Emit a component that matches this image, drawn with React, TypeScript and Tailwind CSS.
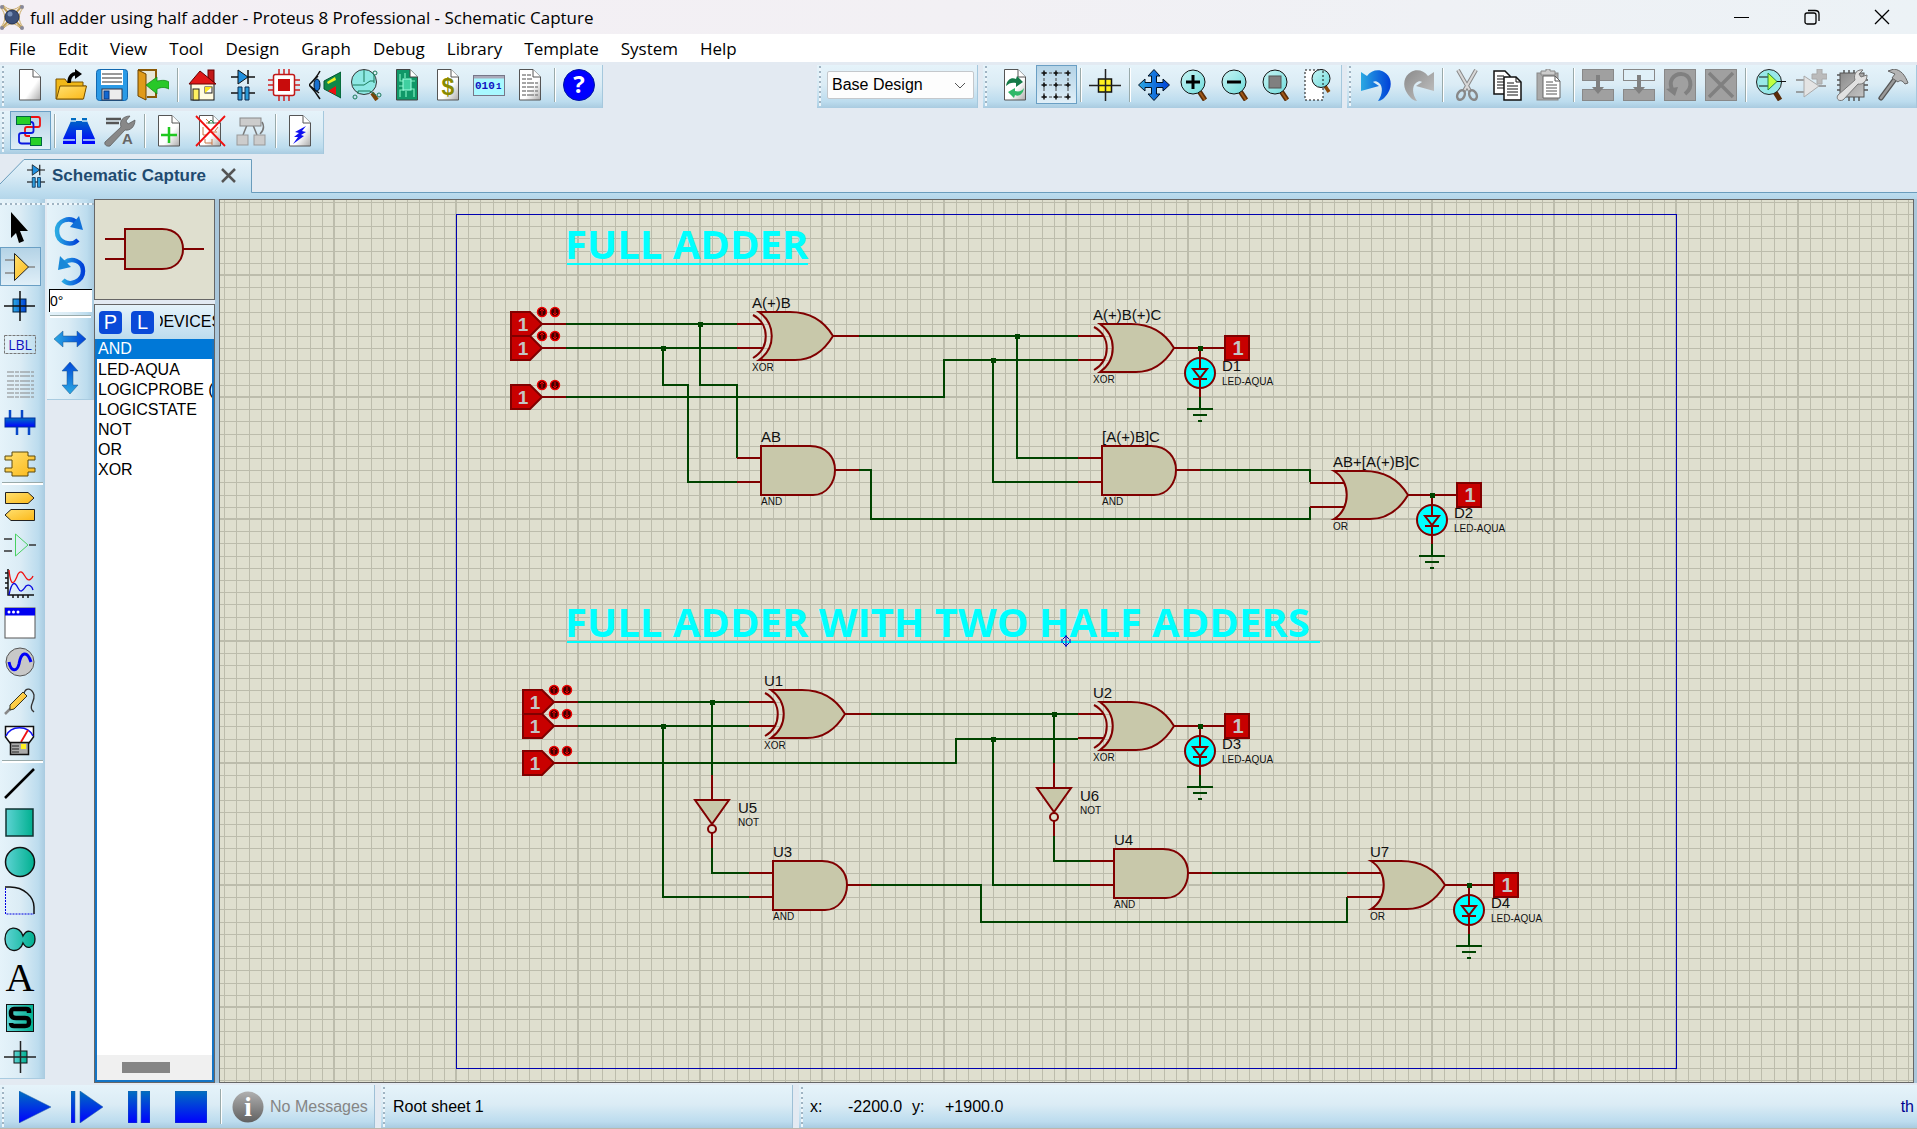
import React, { ReactNode } from "react";

/* ---------- shared paint definitions ---------- */

function Paints() {
  return (
    <svg width="0" height="0" className="absolute" aria-hidden="true">
      <defs>
        <linearGradient id="paper" x1="0" y1="0" x2="1" y2="1">
          <stop offset="0.6" stopColor="#fff" />
          <stop offset="1" stopColor="#aaa" />
        </linearGradient>
        <linearGradient id="gold" x1="0" y1="0" x2="1" y2="1">
          <stop offset="0" stopColor="#ffe070" />
          <stop offset="1" stopColor="#fbb818" />
        </linearGradient>
        <linearGradient id="blue" x1="0" y1="0" x2="1" y2="0">
          <stop offset="0" stopColor="#2aa9e2" />
          <stop offset="1" stopColor="#0040d8" />
        </linearGradient>
        <linearGradient id="blueDown" x1="0" y1="0" x2="0" y2="1">
          <stop offset="0" stopColor="#0070c0" />
          <stop offset="1" stopColor="#0000ff" />
        </linearGradient>
        <linearGradient id="blueUp" x1="0" y1="0" x2="0" y2="1">
          <stop offset="0" stopColor="#0048d8" />
          <stop offset="1" stopColor="#2aa9e2" />
        </linearGradient>
        <linearGradient id="teal" x1="0" y1="0" x2="1" y2="0">
          <stop offset="0" stopColor="#5ed3d3" />
          <stop offset="1" stopColor="#00b090" />
        </linearGradient>
        <linearGradient id="lens" x1="0" y1="0" x2="1" y2="1">
          <stop offset="0" stopColor="#c8f4f4" />
          <stop offset="1" stopColor="#70dcdc" />
        </linearGradient>
        <linearGradient id="grey" x1="0" y1="0" x2="1" y2="1">
          <stop offset="0" stopColor="#8a8a8a" />
          <stop offset="1" stopColor="#c4c4c4" />
        </linearGradient>
        <linearGradient id="infoGrey" x1="0" y1="0" x2="0" y2="1">
          <stop offset="0" stopColor="#b0b0b0" />
          <stop offset="1" stopColor="#606060" />
        </linearGradient>
      </defs>
    </svg>
  );
}

/* ---------- icons, all on a 32 x 32 field ---------- */

const Ico = ({ children }: { children: ReactNode }) => (
  <svg width="32" height="32" viewBox="0 0 32 32" fill="none" aria-hidden="true" className="shrink-0">
    {children}
  </svg>
);

const Page = ({ children }: { children?: ReactNode }) => (
  <Ico>
    <path d="M5.5 .5H19L26.500 8V31H5.500Z" fill="url(#paper)" stroke="#555" />
    <path d="M19 .5V8H26.500" stroke="#555" fill="#fff" />
    {children}
  </Ico>
);

const Lens = ({ children }: { children?: ReactNode }) => (
  <Ico>
    <path d="M20 22L26 31" stroke="#5a2c08" strokeWidth="5" />
    <path d="M20 22L26 31" stroke="#a05818" strokeWidth="2" />
    <circle cx="14" cy="13" r="12" fill="url(#lens)" stroke="#111" />
    {children}
  </Ico>
);

const DiodeCap = (
  <>
    <path d="M4 8H28M21 1V15" stroke="#111" strokeWidth="1.500" />
    <path d="M11 1V15L21 8Z" fill="#2090e0" stroke="#111" />
    <path d="M4 24H28" stroke="#111" strokeWidth="1.500" />
    <path d="M11 18H15V31H11ZM18 18H22V31H18Z" fill="#2a9ad8" stroke="#0a2a50" />
  </>
);

const icons: Record<string, ReactNode> = {
  new: <Page />,
  open: (
    <Ico>
      <path d="M1 30V10H10L12 13H28V17H31L28 30Z" fill="#f0b818" stroke="#7a5200" />
      <path d="M5 17H31.500L28.500 30H1.500Z" fill="url(#gold)" stroke="#7a5200" />
      <path d="M14 14C14 7 18 4 22 5" stroke="#000" strokeWidth="3.500" />
      <path d="M20 0L27 5L20 10Z" fill="#000" />
    </Ico>
  ),
  save: (
    <Ico>
      <rect x=".5" y=".5" width="31" height="31" rx="3" fill="#2a9ae6" stroke="#1268b0" />
      <rect x="5" y="1" width="22" height="15" fill="#fff" />
      <path d="M6 5H26M6 9H26M6 13H26" stroke="#777" strokeWidth="1.500" />
      <rect x="6" y="20" width="20" height="11" fill="#ececec" stroke="#334" />
      <rect x="8" y="22" width="5" height="8" fill="#1268d0" stroke="#0a3a80" />
    </Ico>
  ),
  exit: (
    <Ico>
      <path d="M1 1H19V28H10" fill="#e8e8d8" stroke="#8a5a08" strokeWidth="2" />
      <path d="M1 1L9 5V31L1 27Z" fill="#e09a18" stroke="#6a4200" />
      <path d="M9 16L20 8V12C26 11 29 11 32 13V20C28 18 24 18 20 20V25Z" fill="#28c828" stroke="#108010" strokeWidth=".7" />
    </Ico>
  ),
  home: (
    <Ico>
      <rect x="22" y="1" width="6" height="12" fill="#c01818" stroke="#600" />
      <rect x="5" y="14" width="23" height="17" fill="#fffbe0" stroke="#111" />
      <path d="M3 15L14 2L30 15Z" fill="#e01818" stroke="#600" />
      <rect x="7" y="20" width="6" height="11" fill="#fff060" stroke="#222" />
      <rect x="19" y="18" width="7" height="6" fill="#fff" stroke="#222" />
      <path d="M19 18H26L19 24Z" fill="#ffe820" />
    </Ico>
  ),
  diode: <Ico>{DiodeCap}</Ico>,
  chip: (
    <Ico>
      <path d="M11 0V32M16 0V32M21 0V32M0 11H32M0 16H32M0 21H32" stroke="#d02020" strokeWidth="1.500" />
      <rect x="5.500" y="5.500" width="21" height="21" rx="2" fill="#fff" stroke="#c01818" strokeWidth="1.500" />
      <rect x="10" y="10" width="12" height="12" fill="#c80c0c" />
    </Ico>
  ),
  eye: (
    <Ico>
      <path d="M11 2C8 8 4 12 0 16C4 20 8 25 11 30M0 16L9 7M0 16L10 24" stroke="#111" strokeWidth="1.500" />
      <ellipse cx="8" cy="16" rx="3" ry="6" fill="#1870d0" stroke="#012" />
      <path d="M32 3V29L15 20V12Z" fill="#108848" stroke="#053" />
      <path d="M18 13L26 8L27 11L19 15Z" fill="#f0f020" />
      <path d="M19 22L27 17V26Z" fill="#f01010" />
    </Ico>
  ),
  inspect: (
    <Ico>
      <path d="M22 24L27 31" stroke="#7a4408" strokeWidth="4" />
      <circle cx="14" cy="13" r="12.500" fill="#8ee8e4" stroke="#333" />
      <path d="M14 1V13M3 16H14L20 12H24M24 6V14M8 25V22H20L26 26" stroke="#1a7a5a" />
      <circle cx="25" cy="4" r="2" stroke="#1a7a5a" />
      <circle cx="29" cy="26" r="2" stroke="#1a7a5a" />
      <circle cx="5" cy="28" r="2" stroke="#1a7a5a" />
    </Ico>
  ),
  pcb: (
    <Ico>
      <path d="M5.500 .5H19L26.500 8V31H5.500Z" fill="#109868" stroke="#444" />
      <path d="M19 .5V8H26.500" fill="#fff" stroke="#444" />
      <path d="M9 5V12H13M14 4V9M8 17H12M9 28V21H13M15 28V22M23 28V20H20M24 12H20" stroke="#7ff0c0" strokeWidth="1.200" />
      <rect x="12" y="10" width="8" height="11" fill="#40d0a0" stroke="#a0ffe0" />
    </Ico>
  ),
  bom: (
    <Page>
      <text x="16" y="26" textAnchor="middle" fontSize="23" fontWeight="bold" fontFamily="Liberation Sans, sans-serif" fill="#8a8a00">$</text>
    </Page>
  ),
  binary: (
    <Ico>
      <rect x=".5" y="6.500" width="31" height="20" fill="#a8f8ff" stroke="#778" />
      <rect x="1" y="7" width="30" height="2.500" fill="#aab" />
      <text x="2" y="20" fontSize="11" fontWeight="bold" fontFamily="Liberation Mono, monospace" fill="#1010c0">010</text>
      <text x="23" y="20" fontSize="9" fontWeight="bold" fontFamily="Liberation Mono, monospace" fill="#1010c0">1</text>
    </Ico>
  ),
  notes: (
    <Page>
      <path d="M8 6H17M8 10H18M8 14H24M8 18H24M8 22H24M8 26H24" stroke="#888" strokeWidth="1.500" strokeDasharray="4 1 7 1" />
    </Page>
  ),
  help: (
    <Ico>
      <circle cx="16" cy="16" r="15.500" fill="#0000ff" stroke="#0018a0" />
      <text x="16" y="24" textAnchor="middle" fontSize="24" fontWeight="bold" fontFamily="Open Sans, sans-serif" fill="#fff">?</text>
    </Ico>
  ),
  route: (
    <Ico>
      <path d="M17 2H24Q26 2 26 4V10Q26 12 24 12H13Q11 12 11 14V19Q11 21 13 21H16" stroke="#f01010" strokeWidth="1.800" />
      <path d="M17 7Q19.500 7 19.500 10V16Q19.500 18 17 18H8Q5 18 5 20V26Q5 28.500 8 28.500H16" stroke="#0818e0" strokeWidth="1.800" />
      <rect x="2.500" y="1.500" width="14" height="8" fill="#28d028" stroke="#064" />
      <rect x="16.500" y="22.500" width="11" height="8" fill="#28d028" stroke="#064" />
    </Ico>
  ),
  find: (
    <Ico>
      <path d="M8 3H13V6H19V3H24V6L32 24V29H19V15H13V29H0V24L8 6Z" fill="url(#blueDown)" />
      <path d="M8 6H13M19 6H24M0 25H12M20 25H32" stroke="#c8e6f8" strokeWidth="1.500" />
    </Ico>
  ),
  assign: (
    <Ico>
      <path d="M2 4H17M2 8H15" stroke="#555" strokeWidth="2.500" />
      <path d="M1 27L17 12C15 6 19 1 26 1L22 6L24 9L31 5C31 12 26 16 21 15L6 31C2 32 0 29 1 27Z" fill="#888" stroke="#555" strokeWidth=".7" />
      <text x="18" y="29" fontSize="15" fontWeight="bold" fontFamily="Liberation Sans, sans-serif" fill="#666">A</text>
    </Ico>
  ),
  addSheet: (
    <Page>
      <path d="M16 12V28M8 20H24" stroke="#20c820" strokeWidth="2.500" />
    </Page>
  ),
  dropSheet: (
    <Page>
      <path d="M12 4L16 8H12M9 12V20H13M16 17H23M21 16L24 12M11 24V28H18M18 24V30" stroke="#c87848" />
      <path d="M14 8L17 5L20 8Z" stroke="#389058" />
      <path d="M2 1L31 31M31 1L2 31" stroke="#f01010" strokeWidth="1.800" />
    </Page>
  ),
  tree: (
    <Ico>
      <path d="M12 10L8 20M18 10L22 20M27 7C30 12 28 16 25 19" stroke="#777" strokeWidth="1.500" />
      <rect x="5" y="3" width="21" height="8" fill="#ccc" stroke="#888" />
      <rect x="2" y="20" width="11" height="10" fill="#ccc" stroke="#999" />
      <rect x="19" y="20" width="11" height="10" fill="#ccc" stroke="#999" />
    </Ico>
  ),
  flash: (
    <Page>
      <path d="M22 11L11 17L15 18L10 22L14 22L9 29L20 21L17 20L22 17L18 16Z" fill="#1010f0" />
    </Page>
  ),
  refresh: (
    <Page>
      <path d="M7 17C8 10 13 8 17 10L18 7L24 13L17 18V14C13 13 10 14 7 17Z" fill="#157a48" />
      <path d="M25 19C24 26 19 28 16 26L15 29L9 23L16 19V22C20 23 23 22 25 19Z" fill="#30b868" />
    </Page>
  ),
  grid: (
    <Ico>
      <path d="M4 4H28M4 16H28M4 28H28M4 4V28M16 4V28M28 4V28" stroke="#444" strokeDasharray="3 2" />
      {[4, 16, 28].map((x) => [4, 16, 28].map((y) => (
        <path key={`${x}-${y}`} d={`M${x - 2.5} ${y}H${x + 2.5}M${x} ${y - 2.5}V${y + 2.5}`} stroke="#111" strokeWidth="1.500" />
      )))}
    </Ico>
  ),
  origin: (
    <Ico>
      <rect x="9.500" y="10" width="13" height="13" fill="#fff020" stroke="#111" strokeWidth="1.500" />
      <path d="M0 16.500H32M16.500 0V32" stroke="#222" strokeWidth="1.500" />
    </Ico>
  ),
  pan: (
    <Ico>
      <path d="M16 .5L22 7H18.500V13.500H25V10L31.500 16L25 22V18.500H18.500V25H22L16 31.500L10 25H13.500V18.500H7V22L.5 16L7 10V13.500H13.500V7H10Z" fill="url(#blue)" stroke="#012" />
    </Ico>
  ),
  zoomIn: <Lens><path d="M14 6V20M7 13H21" stroke="#000" strokeWidth="3" /></Lens>,
  zoomOut: <Lens><path d="M7 13H21" stroke="#000" strokeWidth="3" /></Lens>,
  zoomAll: <Lens><rect x="8" y="7" width="12" height="12" fill="#808080" stroke="#555" /></Lens>,
  zoomArea: (
    <Ico>
      <rect x="3" y="1" width="18" height="30" fill="#fff" stroke="#111" strokeDasharray="2 2" />
      <path d="M23 17L27 23" stroke="#8a4808" strokeWidth="3.500" />
      <circle cx="19" cy="9.500" r="9" fill="url(#lens)" stroke="#111" />
      <path d="M21 2V18" stroke="#111" strokeDasharray="2 2" />
    </Ico>
  ),
  undo: (
    <Ico>
      <path d="M0 3L6 7C10 1 18 0 23 3C30 7 32 16 27 24C24 29 20 32 17 32C22 25 22 17 18 14C16 12 13 12 12 13L18 17L0 22Z" fill="url(#blue)" />
    </Ico>
  ),
  redo: (
    <Ico>
      <path d="M32 3L26 7C22 1 14 0 9 3C2 7 0 16 5 24C8 29 12 32 15 32C10 25 10 17 14 14C16 12 19 12 20 13L14 17L32 22Z" fill="url(#grey)" />
    </Ico>
  ),
  cut: (
    <Ico>
      <path d="M7 1L19 22M25 1L13 22" stroke="#888" strokeWidth="4" />
      <path d="M7 1L19 22M25 1L13 22" stroke="#d8d8d8" strokeWidth="2" />
      <ellipse cx="10" cy="26" rx="3.500" ry="5" transform="rotate(25 10 26)" stroke="#888" strokeWidth="2.500" />
      <ellipse cx="22" cy="26" rx="3.500" ry="5" transform="rotate(-25 22 26)" stroke="#888" strokeWidth="2.500" />
    </Ico>
  ),
  copy: (
    <Ico>
      <path d="M2 2H13L18 7V25H2Z" fill="#fff" stroke="#111" strokeWidth="1.500" />
      <path d="M5 7H12M5 10H14M5 13H14M5 16H14M5 19H14" stroke="#111" />
      <path d="M12 8H24L29 13V31H12Z" fill="#fff" stroke="#111" strokeWidth="1.500" />
      <path d="M24 8V13H29M15 14H22M15 17H26M15 20H26M15 23H26M15 26H26" stroke="#111" />
    </Ico>
  ),
  paste: (
    <Ico>
      <rect x="4" y="4" width="21" height="27" fill="#aaa" stroke="#888" />
      <path d="M8 2H13V0H17V2H22V6H8Z" fill="#ccc" stroke="#888" />
      <path d="M10 7H22L27 12V29H10Z" fill="#fff" stroke="#666" />
      <path d="M22 7V12H27M13 13H20M13 16H24M13 19H24M13 22H24M13 25H24" stroke="#555" />
    </Ico>
  ),
  blockCopy: (
    <Ico>
      <rect x=".5" y=".5" width="31" height="11" fill="#a0a0a0" stroke="#888" />
      <rect x=".5" y="20.500" width="31" height="11" fill="#a0a0a0" stroke="#888" />
      <path d="M14 6H18V18H22L16 25L10 18H14Z" fill="#808080" />
    </Ico>
  ),
  blockMove: (
    <Ico>
      <rect x=".5" y=".5" width="31" height="11" fill="#e0f0f8" stroke="#888" />
      <rect x=".5" y="20.500" width="31" height="11" fill="#a0a0a0" stroke="#888" />
      <path d="M14 6H18V18H22L16 25L10 18H14Z" fill="#808080" />
    </Ico>
  ),
  blockRotate: (
    <Ico>
      <rect x=".5" y=".5" width="31" height="31" fill="#a0a0a0" stroke="#888" />
      <path d="M9 22C3 12 10 5 17 5C27 5 30 18 21 25" stroke="#808080" strokeWidth="4" />
      <path d="M2 20L14 18L11 27Z" fill="#808080" />
    </Ico>
  ),
  blockDelete: (
    <Ico>
      <rect x=".5" y=".5" width="31" height="31" fill="#a0a0a0" stroke="#888" />
      <path d="M4 4L28 28M28 4L4 28" stroke="#808080" strokeWidth="3.500" />
    </Ico>
  ),
  pick: (
    <Ico>
      <path d="M21 23L26 31" stroke="#5a2c08" strokeWidth="5" />
      <circle cx="15" cy="13" r="12.500" fill="#98e8e8" stroke="#222" />
      <path d="M5 8H14M5 17H14M22 12.500H32" stroke="#111" />
      <path d="M14 4V21L23 12.500Z" fill="#c0ff40" stroke="#284" />
    </Ico>
  ),
  make: (
    <Ico>
      <path d="M1 11H9M1 23H9M24 17H31" stroke="#888" strokeWidth="1.500" />
      <path d="M9 7V28L24 17Z" fill="#e4e4e4" stroke="#aaa" />
      <path d="M22 0H27V5H32V10H27V15H22V10H17V5H22Z" fill="#bbb" stroke="#aaa" />
    </Ico>
  ),
  pack: (
    <Ico>
      <path d="M1 6H5M1 11H5M1 16H5M1 21H5M28 11H32M28 16H32M28 21H32M8 1V4M13 1V4M18 1V4M13 28V32M18 28V32M23 28V32" stroke="#555" strokeWidth="1.500" />
      <rect x="4" y="4" width="24" height="24" fill="url(#grey)" stroke="#555" />
      <path d="M2 26L19 11C17 5 21 0 27 1L23 5L25 8L31 6C31 12 27 16 22 15L7 31C2 33 0 29 2 26Z" fill="#e0e0e0" stroke="#777" />
    </Ico>
  ),
  hammer: (
    <Ico>
      <path d="M18 10L4 29" stroke="#555" strokeWidth="5" strokeLinecap="round" />
      <path d="M18 10L4 29" stroke="#999" strokeWidth="2.500" strokeLinecap="round" />
      <path d="M11 2L17 0C24 1 28 6 31 14L28 15C25 11 23 11 21 13L15 9L18 5Z" fill="#b4b4b4" stroke="#666" />
    </Ico>
  ),
  select: <Ico><path d="M7 0L24 19L16 19L20 29L15 31L12 21L7 26Z" fill="#000" /></Ico>,
  component: (
    <Ico>
      <path d="M1 9H11M1 22H11M24 16H31" stroke="#888" strokeWidth="1.500" />
      <path d="M10.500 2.500V29.500L24.500 16Z" fill="url(#gold)" stroke="#222" />
    </Ico>
  ),
  junction: (
    <Ico>
      <rect x="9" y="9" width="13" height="13" fill="url(#blue)" stroke="#024" />
      <path d="M0 16H31M16 1V31" stroke="#111" strokeWidth="1.500" />
    </Ico>
  ),
  label: (
    <Ico>
      <rect x=".5" y="6.500" width="31" height="18" stroke="#777" strokeDasharray="3 1" />
      <text x="16" y="21" textAnchor="middle" fontSize="14" fontFamily="Open Sans, sans-serif" fill="#1010c0">LBL</text>
    </Ico>
  ),
  script: (
    <Ico>
      <path d="M3 4H30M3 8H30M3 13H30M3 17H30M3 21H30M3 25H30M3 29H30" stroke="#888" strokeWidth="1.200" strokeDasharray="7 1 4 1 10 1" />
    </Ico>
  ),
  bus: (
    <Ico>
      <path d="M6 3V12M18 3V12M13 20V28M25 20V28" stroke="#0848c8" strokeWidth="2.500" />
      <rect x="1" y="11" width="30" height="9" fill="url(#blueDown)" stroke="#0030a0" />
    </Ico>
  ),
  sheet: (
    <Ico>
      <path d="M8 6H24V10H31V14H24V22H31V26H24V30H8V26H1V22H8V14H1V10H8Z" fill="url(#gold)" stroke="#5a4a10" />
    </Ico>
  ),
  terminal: (
    <Ico>
      <path d="M1.500 2.500H24L30 8L24 13.500H1.500Z" fill="url(#gold)" stroke="#222" />
      <path d="M30.500 19.500H7L1 25L7 30.500H30.500Z" fill="url(#gold)" stroke="#222" />
    </Ico>
  ),
  pin: (
    <Ico>
      <path d="M0 10H8M0 22H8M25 16H32" stroke="#333" strokeWidth="1.500" />
      <path d="M11.500 5V27L24 16Z" stroke="#48d060" />
    </Ico>
  ),
  graph: (
    <Ico>
      <path d="M4 1V27H30M1 5H4M1 10H4M1 15H4M1 20H4M9 27V30M14 27V30M19 27V30M24 27V30" stroke="#111" strokeWidth="1.500" />
      <path d="M5 2C7 22 11 14 14 6C18 0 20 8 23 11C25 13 28 11 29 8" stroke="#f01010" strokeWidth="1.300" />
      <path d="M5 27C8 12 11 14 14 20C17 26 19 22 22 18C25 16 28 18 29 22" stroke="#0808e0" strokeWidth="1.300" />
    </Ico>
  ),
  popup: (
    <Ico>
      <rect x="1" y="1" width="30" height="30" fill="#fff" stroke="#555" />
      <rect x="1" y="1" width="30" height="7.500" fill="#0000f0" />
      <circle cx="5" cy="5" r="1.500" fill="#fff" />
      <circle cx="9.500" cy="5" r="1.500" fill="#fff" />
      <circle cx="14" cy="5" r="1.500" fill="#fff" />
    </Ico>
  ),
  generator: (
    <Ico>
      <circle cx="16" cy="16" r="14" fill="#c8c8c8" stroke="#555" />
      <path d="M5 16C7 26 13 26 15 18C17 6 23 4 27 16" stroke="#0000f8" strokeWidth="3" />
    </Ico>
  ),
  probe: (
    <Ico>
      <path d="M1 29L7 23" stroke="#888" strokeWidth="2.500" />
      <path d="M6 20L19 7L23 11L10 24L6 25Z" fill="url(#gold)" stroke="#332" />
      <path d="M20 8C22 2 28 3 30 10C31 17 25 20 28 25L30 27" stroke="#333" strokeWidth="1.300" />
    </Ico>
  ),
  meter: (
    <Ico>
      <path d="M1.500 2.500H29.500V13L25 19H6L1.500 13Z" fill="#fff" stroke="#111" strokeWidth="1.500" />
      <path d="M2 12C7 1 24 1 29 12" stroke="#1010f0" strokeWidth="1.500" />
      <path d="M17 18L24 6" stroke="#f01010" strokeWidth="1.800" />
      <rect x="6.500" y="18.500" width="18" height="12" fill="#aaa" stroke="#111" strokeWidth="1.500" />
      <path d="M8 22H15M8 25H15M8 28H15" stroke="#222" />
      <rect x="17" y="20" width="5" height="5" fill="#ffee20" />
    </Ico>
  ),
  line: <Ico><path d="M1 30L30 1" stroke="#000" strokeWidth="2.500" /></Ico>,
  box: <Ico><rect x="2" y="2" width="27" height="27" fill="url(#teal)" stroke="#133" strokeWidth="1.500" /></Ico>,
  circle: <Ico><circle cx="16" cy="16" r="14.500" fill="url(#teal)" stroke="#111" strokeWidth="1.500" /></Ico>,
  arc: (
    <Ico>
      <path d="M1 2H6C20 2 30 12 30 22V29" stroke="#111" strokeWidth="1.500" />
      <path d="M1.500 3V29H30" stroke="#0000e0" strokeDasharray="2 1" />
    </Ico>
  ),
  path: (
    <Ico>
      <path d="M19 12C16 1 1 1 1 15C1 29 16 30 19 19C23 27 31 23 31 15C31 7 23 4 19 12Z" fill="url(#teal)" stroke="#111" strokeWidth="1.300" />
    </Ico>
  ),
  text: (
    <Ico>
      <text x="16" y="28" textAnchor="middle" fontSize="40" fontFamily="Liberation Serif, serif" fill="#000">A</text>
    </Ico>
  ),
  symbol: (
    <Ico>
      <rect x="2.500" y="2.500" width="27" height="27" fill="url(#teal)" stroke="#111" />
      <path d="M25 11V9C25 8 24 7 22 7H10C7 7 7 9 7 11.500C7 15 9 16 12 16H21C25 16 25 18 25 20C25 23 24 24 21 24H10C8 24 7 23 7 21" stroke="#000" strokeWidth="4.500" />
    </Ico>
  ),
  marker: (
    <Ico>
      <rect x="10" y="10" width="13" height="12" fill="url(#teal)" stroke="#111" />
      <path d="M0 16H32M16.500 0V32" stroke="#222" strokeWidth="1.500" />
    </Ico>
  ),
  rotateCw: (
    <Ico>
      <path d="M24 25C17 32 3 28 3 16C3 5 16 1 23 8" stroke="url(#blue)" strokeWidth="4.500" />
      <path d="M25 1L29 15L16 12Z" fill="#1070d8" />
    </Ico>
  ),
  rotateCcw: (
    <Ico>
      <path d="M9 26C16 33 29 27 29 17C29 7 18 3 10 9" stroke="url(#blue)" strokeWidth="4.500" />
      <path d="M6 2L4 16L17 13Z" fill="#1888d8" />
    </Ico>
  ),
  flipH: <Ico><path d="M0 16L9 8V13H23V8L32 16L23 24V19H9V24Z" fill="url(#blue)" stroke="#258" strokeWidth=".5" /></Ico>,
  flipV: <Ico><path d="M16 0L24 9H19V23H24L16 32L8 23H13V9H8Z" fill="url(#blueUp)" stroke="#258" strokeWidth=".5" /></Ico>,
};

/* ---------- toolbar pieces ---------- */

function ToolButton({ name, label, pressed }: { name: string; label: string; pressed?: boolean }) {
  return (
    <button
      type="button"
      aria-label={label}
      aria-pressed={pressed}
      className={
        pressed
          ? "flex h-[39px] w-[41px] shrink-0 items-center justify-center border border-[#6a9fc4] bg-gradient-to-b from-[#b4d3e6] to-[#e0eff8] pr-[2px]"
          : "flex h-[39px] w-[41px] shrink-0 items-center justify-center pr-[2px]"
      }
    >
      {icons[name]}
    </button>
  );
}

const VSep = () => <div className="mx-[3px] my-[3px] h-[34px] w-[2px] shrink-0 border-l border-[#9aa] bg-white" />;
const HSep = () => <div className="my-[1px] ml-[2px] h-[3px] w-[41px] shrink-0 border-t border-[#9aa] bg-white" />;

const Grip = () => (
  <div className="mt-px mr-[6px] ml-[2px] h-[40px] w-[2px] shrink-0 bg-[repeating-linear-gradient(180deg,#9fb4c3_0_2px,#eef6fb_2px_5px)]" />
);
const TopGrip = () => (
  <div className="mt-[4px] mb-[3px] h-[2px] shrink-0 bg-[repeating-linear-gradient(90deg,#9fb4c3_0_2px,#eef6fb_2px_5px)]" />
);

function Toolbar({ children, label }: { children: ReactNode; label: string }) {
  return (
    <div
      role="toolbar"
      aria-label={label}
      className="flex h-[43px] shrink-0 items-start border-r border-[#a5c8dd] bg-[linear-gradient(180deg,#e5f3fa_0%,#dbecf5_45%,#bcdcee_85%,#a9cbe0_100%)] pr-[2px]"
    >
      <Grip />
      {children}
    </div>
  );
}

type Tool = [string, string, boolean?];

function Tools({ items }: { items: (Tool | null)[] }) {
  return (
    <>
      {items.map((t, i) => (t ? <ToolButton key={t[0]} name={t[0]} label={t[1]} pressed={t[2]} /> : <VSep key={i} />))}
    </>
  );
}

function TitleBar() {
  return (
    <header className="flex h-[34px] shrink-0 items-center bg-gradient-to-r from-[#f4eff4] via-[#f2f0f4] to-[#ecf2f6]">
      <svg width="24" height="28" viewBox="0 0 24 28" className="shrink-0" aria-hidden="true">
        <path d="M2 3L22 25M22 3L2 25" stroke="#c0a058" strokeWidth="2" />
        <path d="M3 2C9 8 15 8 21 2M3 26C9 19 15 19 21 26M1 5C6 11 6 18 1 24M23 5C18 11 18 18 23 24" stroke="#c8a860" fill="none" />
        <circle cx="12" cy="14" r="7" fill="#3c5078" stroke="#223050" />
        <circle cx="10" cy="11" r="2.500" fill="#7890b8" />
        <circle cx="2" cy="4" r="2" fill="#889" />
        <circle cx="22" cy="4" r="2" fill="#889" />
        <circle cx="2" cy="25" r="2" fill="#889" />
        <circle cx="22" cy="25" r="2" fill="#889" />
      </svg>
      <h1 className="ml-[6px] pt-px font-['Open_Sans',sans-serif] text-[17px] whitespace-nowrap text-black">
        full adder using half adder - Proteus 8 Professional - Schematic Capture
      </h1>
      <div className="ml-auto flex h-full">
        <button type="button" aria-label="Minimize" className="flex w-[70px] items-center justify-center">
          <svg width="16" height="16"><path d="M0 8.500H15" stroke="#000" /></svg>
        </button>
        <button type="button" aria-label="Restore" className="flex w-[70px] items-center justify-center">
          <svg width="16" height="16" fill="none" stroke="#000" strokeWidth="1.300">
            <rect x="1" y="4" width="11" height="11" rx="2" />
            <path d="M4 1.500H11C13.500 1.500 15 3 15 5V12" />
          </svg>
        </button>
        <button type="button" aria-label="Close" className="flex w-[70px] items-center justify-center">
          <svg width="16" height="16"><path d="M1 1L15 15M15 1L1 15" stroke="#000" strokeWidth="1.300" /></svg>
        </button>
      </div>
    </header>
  );
}

const menus = ["File", "Edit", "View", "Tool", "Design", "Graph", "Debug", "Library", "Template", "System", "Help"];

function MenuBar() {
  return (
    <nav className="flex h-[28px] shrink-0 items-center bg-white font-['Open_Sans',sans-serif] text-[17px] text-black">
      {menus.map((m) => (
        <button key={m} type="button" className="px-[11px] pt-px first:pl-[9px]">{m}</button>
      ))}
    </nav>
  );
}

function TopToolbars() {
  return (
    <div className="shrink-0 pt-[3px]">
      <div className="flex justify-between">
        <Toolbar label="Project">
          <Tools
            items={[
              ["new", "New project"], ["open", "Open project"], ["save", "Save project"], ["exit", "Close project"], null,
              ["home", "Home page"], ["diode", "Schematic capture"], ["chip", "PCB layout"], ["eye", "3D viewer"],
              ["inspect", "Gerber viewer"], ["pcb", "Design explorer"], ["bom", "Bill of materials"], ["binary", "Source code"],
              ["notes", "Project notes"], null, ["help", "Help contents"],
            ]}
          />
        </Toolbar>
        <div className="flex gap-[5px]">
          <Toolbar label="Variant">
            <div className="relative mt-[6px] mr-px">
              <select
                aria-label="Design variant"
                defaultValue="Base Design"
                className="h-[28px] w-[147px] appearance-none rounded-[2px] border border-[#c4c8cc] bg-[#fdfdfd] pl-[4px] font-['Liberation_Sans',sans-serif] text-[16px] text-black"
              >
                <option>Base Design</option>
              </select>
              <svg width="12" height="8" className="pointer-events-none absolute top-[11px] right-[8px]" aria-hidden="true">
                <path d="M1 1L6 6L11 1" stroke="#555" fill="none" />
              </svg>
            </div>
          </Toolbar>
          <Toolbar label="View">
            <div className="w-[2px]" />
            <Tools
              items={[
                ["refresh", "Redraw"], ["grid", "Toggle grid", true], null, ["origin", "Toggle false origin"], null,
                ["pan", "Centre at cursor"], ["zoomIn", "Zoom in"], ["zoomOut", "Zoom out"], ["zoomAll", "Zoom to view entire sheet"],
                ["zoomArea", "Zoom to area"],
              ]}
            />
          </Toolbar>
          <Toolbar label="Edit">
            <Tools
              items={[
                ["undo", "Undo"], ["redo", "Redo"], null, ["cut", "Cut"], ["copy", "Copy"], ["paste", "Paste"], null,
                ["blockCopy", "Block copy"], ["blockMove", "Block move"], ["blockRotate", "Block rotate"], ["blockDelete", "Block delete"], null,
                ["pick", "Pick parts"], ["make", "Make device"], ["pack", "Packaging tool"], ["hammer", "Decompose"],
              ]}
            />
          </Toolbar>
        </div>
      </div>
      <div className="mt-[3px] flex">
        <Toolbar label="Design">
          <Tools
            items={[
              ["route", "Wire autorouter", true], null, ["find", "Search and tag"], ["assign", "Property assignment"], null,
              ["addSheet", "New sheet"], ["dropSheet", "Remove sheet"], ["tree", "Exit to parent"], null, ["flash", "Electrical rules check"],
            ]}
          />
        </Toolbar>
      </div>
    </div>
  );
}

function TabStrip() {
  return (
    <div className="relative mt-[5px] h-[40px] shrink-0">
      <div className="absolute inset-x-0 bottom-0 h-[7px] border-t border-[#6a9cbc] bg-[linear-gradient(180deg,#bcdcee,#b4d6ea)]" />
      <svg width="253" height="40" className="absolute top-0 left-0" aria-hidden="true">
        <defs>
          <linearGradient id="tab" x1="0" y1="0" x2="0" y2="1">
            <stop offset="0" stopColor="#e4f2f9" />
            <stop offset="0.5" stopColor="#d6eaf5" />
            <stop offset="1" stopColor="#bcdcee" />
          </linearGradient>
        </defs>
        <path d="M0 25L24 .5H251.500V34H0Z" fill="url(#tab)" />
        <path d="M0 25L24 .5H251.500V33.500" fill="none" stroke="#6a9cbc" />
      </svg>
      <div role="tablist" className="relative flex h-[33px] items-center pl-[26px]">
        <svg width="20" height="24" viewBox="3 0 26 32" fill="none" aria-hidden="true">{DiodeCap}</svg>
        <button role="tab" aria-selected="true" type="button" className="ml-[6px] font-['Liberation_Sans',sans-serif] text-[17px] font-bold text-[#1f4b70]">
          Schematic Capture
        </button>
        <button type="button" aria-label="Close tab" className="ml-[14px]">
          <svg width="17" height="17"><path d="M2 2L15 15M15 2L2 15" stroke="#555" strokeWidth="2.500" /></svg>
        </button>
      </div>
    </div>
  );
}

/* ---------- left side ---------- */

const modes: (Tool | null)[] = [
  ["select", "Selection mode"], ["component", "Component mode", true], ["junction", "Junction dot mode"], ["label", "Wire label mode"],
  ["script", "Text script mode"], ["bus", "Buses mode"], ["sheet", "Subcircuit mode"], null,
  ["terminal", "Terminals mode"], ["pin", "Device pins mode"], ["graph", "Graph mode"], ["popup", "Active popup mode"],
  ["generator", "Generator mode"], ["probe", "Probe mode"], ["meter", "Instruments"], null,
  ["line", "2D line"], ["box", "2D box"], ["circle", "2D circle"], ["arc", "2D arc"], ["path", "2D path"],
  ["text", "2D text"], ["symbol", "2D symbols"], ["marker", "2D markers"],
];

const sideFill =
  "flex shrink-0 flex-col border-b border-[#a9cbe0] bg-[linear-gradient(90deg,#e5f3fa_0%,#dbecf5_45%,#bcdcee_85%,#a9cbe0_100%)]";

function ModeBar() {
  return (
    <div role="toolbar" aria-label="Modes" className={`${sideFill} w-[45px] pb-[2px]`}>
      <TopGrip />
      {modes.map((t, i) => (t ? <ToolButton key={t[0]} name={t[0]} label={t[1]} pressed={t[2]} /> : <HSep key={i} />))}
    </div>
  );
}

function OrientationBar() {
  return (
    <div role="toolbar" aria-label="Orientation" className={`${sideFill} w-[47px] items-center`}>
      <div className="w-full"><TopGrip /></div>
      <div className="h-[3px]" />
      <ToolButton name="rotateCw" label="Rotate clockwise" />
      <ToolButton name="rotateCcw" label="Rotate anti-clockwise" />
      <input
        aria-label="Angle"
        defaultValue="0°"
        className="h-[23px] w-[43px] border-t border-l border-black bg-white font-['Liberation_Sans',sans-serif] text-[14px] text-black"
      />
      <div className="mt-[3px] mb-px h-[3px] w-[41px] border-t border-[#9aa] bg-white" />
      <ToolButton name="flipH" label="X-mirror" />
      <ToolButton name="flipV" label="Y-mirror" />
      <div className="h-[2px]" />
    </div>
  );
}

const devices = ["AND", "LED-AQUA", "LOGICPROBE (BIG)", "LOGICSTATE", "NOT", "OR", "XOR"];

function DevicePanel() {
  return (
    <aside className="flex w-[121px] shrink-0 flex-col font-['Liberation_Sans',sans-serif]">
      <div className="flex h-[101px] shrink-0 items-center justify-center border border-[#666] bg-[#dfdfcf] pb-px">
        <svg width="101" height="44" fill="#c8c8aa" stroke="#7f0000" strokeWidth="2" aria-label="AND gate preview">
          <path d="M1 12H21M1 32H21M79 22H100" />
          <path d="M21 2H58C72 2 79 11 79 22C79 33 72 42 58 42H21Z" />
        </svg>
      </div>
      <div className="mt-[4px] flex min-h-0 flex-1 flex-col border border-[#666]">
        <div className="flex h-[34px] shrink-0 items-center gap-[9px] overflow-hidden bg-[linear-gradient(180deg,#e5f3fa,#bcdcee)] pl-[4px]">
          <button type="button" aria-label="Pick devices" className="h-[23px] w-[23px] shrink-0 rounded-[4px] bg-[#0a4ad8] text-[20px] leading-[23px] text-white">P</button>
          <button type="button" aria-label="Library manager" className="h-[23px] w-[23px] shrink-0 rounded-[4px] bg-[#0a4ad8] text-[20px] leading-[23px] text-white">L</button>
          <div className="-ml-[3px] flex min-w-0 flex-1 justify-center overflow-hidden text-[16px] text-black">
            <span>DEVICES</span>
          </div>
        </div>
        <div className="flex min-h-0 flex-1 flex-col border-x-2 border-b-2 border-[#1474c4] bg-white">
          <ul role="listbox" aria-label="Devices" className="min-h-0 flex-1 overflow-hidden text-[16px] leading-[20px] text-black">
            {devices.map((d, i) => (
              <li
                key={d}
                role="option"
                aria-selected={i === 0}
                className={i === 0 ? "mb-px overflow-hidden bg-[#0078d7] pl-px whitespace-nowrap text-white" : "overflow-hidden pl-px whitespace-nowrap"}
              >
                {d}
              </li>
            ))}
          </ul>
          <div className="flex h-[25px] shrink-0 items-center bg-[#f0f0f0]">
            <div className="ml-[25px] h-[11px] w-[48px] bg-[#858585]" />
          </div>
        </div>
      </div>
    </aside>
  );
}

/* ---------- schematic ---------- */

const CELL = 61 / 5;
const u = (n: number) => Math.round(n * CELL);

const RED = "#800000";
const WIRE = "#004400";
const BODY = "#c8c8aa";

const Name = ({ x, y, t }: { x: number; y: number; t: string }) => (
  <text x={x} y={y} fontSize="15" fill="#111">{t}</text>
);
const Value = ({ x, y, t }: { x: number; y: number; t: string }) => (
  <text x={x} y={y} fontSize="10" fill="#111">{t}</text>
);

function Wire({ p }: { p: [number, number][] }) {
  return <polyline points={p.map(([x, y]) => `${u(x)},${u(y)}`).join(" ")} fill="none" stroke={WIRE} strokeWidth="2" />;
}

const Dot = ({ x, y }: { x: number; y: number }) => <rect x={u(x) - 2} y={u(y) - 2} width="5" height="5" fill={WIRE} />;

function Pulse({ x, y, down }: { x: number; y: number; down?: boolean }) {
  return (
    <g fill="none">
      <circle cx={x} cy={y} r="4.500" fill="#400000" stroke="#f00000" strokeWidth="1.500" />
      <path d={`M${x} ${y - 3}V${y + 3}M${x - 2} ${down ? y + 1 : y - 1}L${x} ${down ? y + 3 : y - 3}L${x + 2} ${down ? y + 1 : y - 1}`} stroke="#f00000" />
    </g>
  );
}

function StateInput({ x, y }: { x: number; y: number }) {
  return (
    <g transform={`translate(${u(x)} ${u(y)})`}>
      <path d="M-25 0H0" stroke={RED} strokeWidth="2" />
      <path d="M-55 -12H-36L-24 0L-36 12H-55Z" fill="#c80000" stroke={RED} strokeWidth="2" />
      <text x="-43" y="7" textAnchor="middle" fontSize="19" fontWeight="bold" fill="#c4c4c4">1</text>
      <Pulse x={-24} y={-12} />
      <Pulse x={-11} y={-12} down />
    </g>
  );
}

function Gate({ kind, x, y, name }: { kind: "XOR" | "AND" | "OR"; x: number; y: number; name: string }) {
  const labelX = kind === "XOR" ? 15 : kind === "AND" ? 24 : 23;
  return (
    <g transform={`translate(${u(x)} ${u(y)})`}>
      <g fill="none" stroke={RED} strokeWidth="2">
        {kind === "AND" && (
          <>
            <path d="M0 -12H24M0 12H24M98 0H122" />
            <path d="M24 -24H73C90 -24 98 -12 98 0C98 12 90 25 76 25H24Z" fill={BODY} />
          </>
        )}
        {kind === "XOR" && (
          <>
            <path d="M22 -24H53C74 -24 87 -15 96 0C87 15 74 24 58 24H22C39 12 39 -12 22 -24Z" fill={BODY} />
            <path d="M16 -21C33 -12 33 12 16 22" />
            <path d="M0 -12H26M0 12H26M96 0H122" />
          </>
        )}
        {kind === "OR" && (
          <>
            <path d="M24 -24H54C76 -24 89 -15 98 0C89 15 76 24 60 24H24C41 14 41 -14 24 -24Z" fill={BODY} />
            <path d="M0 -12H35M0 12H35M98 0H122" />
          </>
        )}
      </g>
      <Name x={labelX} y={-28} t={name} />
      <Value x={labelX} y={35} t={kind} />
    </g>
  );
}

function Inverter({ x, y, name }: { x: number; y: number; name: string }) {
  return (
    <g transform={`translate(${u(x)} ${u(y)})`}>
      <g fill={BODY} stroke={RED} strokeWidth="2">
        <path d="M0 0V25M0 58V73" />
        <path d="M-17 25H17L0 49Z" />
        <circle cx="0" cy="54" r="4" fill="#dfdfcf" />
      </g>
      <Name x={26} y={38} t={name} />
      <Value x={26} y={51} t="NOT" />
    </g>
  );
}

function Output({ x, y, name }: { x: number; y: number; name: string }) {
  return (
    <g transform={`translate(${u(x)} ${u(y)})`}>
      <g fill="none" stroke={RED} strokeWidth="2">
        <path d="M0 0H24" />
        <rect x="25" y="-12" width="24" height="24" fill="#c80000" />
        <circle cx="0" cy="25" r="15" fill="#00ffff" />
        <path d="M0 0V21M0 30V49M-7 21H7L0 30ZM-7 31H7" />
        <path d="M0 49V61M-13 61H13M-7 67H7M-2 73H2" stroke={WIRE} />
      </g>
      <text x="38" y="7" textAnchor="middle" fontSize="20" fontWeight="bold" fill="#c4c4c4">1</text>
      <rect x="-2" y="-2" width="5" height="5" fill={WIRE} />
      <Name x={22} y={23} t={name} />
      <Value x={22} y={37} t="LED-AQUA" />
    </g>
  );
}

function Heading({ y, t, width }: { y: number; t: string; width: number }) {
  return (
    <g>
      <text x="109" y={y} fontSize="40" fontWeight="bold" fontFamily="Open Sans, sans-serif" fill="#00ffff">{t}</text>
      <rect x="111" y={y + 4} width={width} height="2" fill="#00ffff" />
    </g>
  );
}

const steps = [1, 2, 3, 4, 5, 6, 7, 8, 9];

function Schematic() {
  return (
    <main className="min-w-0 flex-1 border border-[#666] bg-[#dfdfcf]">
      <svg className="block h-full w-full font-['Liberation_Sans',sans-serif]" aria-label="Schematic sheet">
        <defs>
          <pattern id="grid" width="122" height="122" patternUnits="userSpaceOnUse" x="236" y="75">
            {steps.map((n) => (
              <g key={n} fill="#bcbcac">
                <rect x={u(n)} y="0" width="1" height="122" />
                <rect x="0" y={u(n)} width="122" height="1" />
              </g>
            ))}
            <path d="M0 0H122V1H1V122H0ZM121 0H122V122H121ZM0 121H122V122H0Z" fill="#bcbcac" />
          </pattern>
        </defs>
        <rect width="100%" height="100%" fill="url(#grid)" />
        <g transform="translate(236 14)">
          <rect x=".5" y=".5" width={u(100)} height={u(70)} fill="none" stroke="#0000b0" />

          <Heading y={45} t="FULL ADDER" width={241} />
          <Wire p={[[9, 9], [23, 9]]} />
          <Wire p={[[9, 11], [23, 11]]} />
          <Wire p={[[20, 9], [20, 14], [23, 14], [23, 20]]} />
          <Wire p={[[17, 11], [17, 14], [19, 14], [19, 22], [23, 22]]} />
          <Wire p={[[9, 15], [40, 15], [40, 12], [51, 12]]} />
          <Wire p={[[33, 10], [51, 10]]} />
          <Wire p={[[46, 10], [46, 20], [51, 20]]} />
          <Wire p={[[44, 12], [44, 22], [51, 22]]} />
          <Wire p={[[61, 21], [70, 21], [70, 22]]} />
          <Wire p={[[33, 21], [34, 21], [34, 25], [70, 25], [70, 24]]} />
          <StateInput x={9} y={9} />
          <StateInput x={9} y={11} />
          <StateInput x={9} y={15} />
          <Gate kind="XOR" x={23} y={10} name="A(+)B" />
          <Gate kind="AND" x={23} y={21} name="AB" />
          <Gate kind="XOR" x={51} y={11} name="A(+)B(+)C" />
          <Gate kind="AND" x={51} y={21} name="[A(+)B]C" />
          <Gate kind="OR" x={70} y={23} name="AB+[A(+)B]C" />
          <Output x={61} y={11} name="D1" />
          <Output x={80} y={23} name="D2" />
          <Dot x={20} y={9} />
          <Dot x={17} y={11} />
          <Dot x={46} y={10} />
          <Dot x={44} y={12} />

          <Heading y={423} t="FULL ADDER WITH TWO HALF ADDERS" width={753} />
          <Wire p={[[10, 40], [24, 40]]} />
          <Wire p={[[10, 42], [24, 42]]} />
          <Wire p={[[21, 40], [21, 46]]} />
          <Wire p={[[21, 52], [21, 54], [24, 54]]} />
          <Wire p={[[17, 42], [17, 56], [24, 56]]} />
          <Wire p={[[10, 45], [41, 45], [41, 43], [51, 43]]} />
          <Wire p={[[34, 41], [51, 41]]} />
          <Wire p={[[49, 41], [49, 45]]} />
          <Wire p={[[49, 51], [49, 53], [52, 53]]} />
          <Wire p={[[44, 43], [44, 55], [52, 55]]} />
          <Wire p={[[62, 54], [73, 54]]} />
          <Wire p={[[34, 55], [43, 55], [43, 58], [73, 58], [73, 56]]} />
          <StateInput x={10} y={40} />
          <StateInput x={10} y={42} />
          <StateInput x={10} y={45} />
          <Gate kind="XOR" x={24} y={41} name="U1" />
          <Gate kind="XOR" x={51} y={42} name="U2" />
          <Gate kind="AND" x={24} y={55} name="U3" />
          <Gate kind="AND" x={52} y={54} name="U4" />
          <Gate kind="OR" x={73} y={55} name="U7" />
          <Inverter x={21} y={46} name="U5" />
          <Inverter x={49} y={45} name="U6" />
          <Output x={61} y={42} name="D3" />
          <Output x={83} y={55} name="D4" />
          <Dot x={21} y={40} />
          <Dot x={17} y={42} />
          <Dot x={49} y={41} />
          <Dot x={44} y={43} />

          <g transform={`translate(${u(50)} ${u(35)})`} fill="none" stroke="#0000c0">
            <path d="M0 -6V6M-3 -2L0 -5L3 -2M-3 2L0 5L3 2M-4 -2V2M4 -2V2" />
          </g>
        </g>
      </svg>
    </main>
  );
}

/* ---------- status bar ---------- */

const statusFill = "bg-[linear-gradient(180deg,#e5f3fa_0%,#dbecf5_45%,#bcdcee_85%,#a9cbe0_100%)]";

function SimButton({ label, children, w }: { label: string; children: ReactNode; w: number }) {
  return (
    <button type="button" aria-label={label}>
      <svg width={w} height="32" fill="url(#blueDown)" stroke="#2060a0" strokeWidth=".5" aria-hidden="true">{children}</svg>
    </button>
  );
}

function StatusBar() {
  return (
    <footer className="mt-[2px] flex h-[44px] shrink-0 gap-[6px] border-b border-[#bdb6ac] font-['Liberation_Sans',sans-serif] text-[16px] text-black">
      <div className={`flex w-[375px] shrink-0 items-center border-r border-[#9fc0d6] ${statusFill}`}>
        <Grip />
        <div className="ml-[9px] flex">
          <SimButton label="Run the simulation" w={32}><path d="M0 0L32 16L0 32Z" /></SimButton>
          <div className="w-[20px]" />
          <SimButton label="Advance by one step" w={32}><path d="M0 0H4V32H0ZM9 0L32 16L9 32Z" /></SimButton>
          <div className="w-[25px]" />
          <SimButton label="Pause" w={22}><path d="M0 0H9V32H0ZM13 0H22V32H13Z" /></SimButton>
          <div className="w-[25px]" />
          <SimButton label="Stop" w={32}><path d="M0 0H32V32H0Z" /></SimButton>
        </div>
        <div className="mr-[10px] ml-[13px] h-[35px] w-[2px] border-l border-[#9aa] bg-white" />
        <svg width="32" height="32" aria-hidden="true">
          <circle cx="16" cy="16" r="15.500" fill="url(#infoGrey)" />
          <text x="16" y="25" textAnchor="middle" fontSize="27" fontWeight="bold" fontFamily="Liberation Serif, serif" fill="#fff">i</text>
        </svg>
        <span className="ml-[6px] whitespace-nowrap text-[#858585]">No Messages</span>
      </div>
      <div className={`flex w-[412px] shrink-0 items-center border-r border-[#9fc0d6] ${statusFill}`}>
        <Grip />
        <span className="ml-[2px]">Root sheet 1</span>
      </div>
      <div className={`flex min-w-0 flex-1 items-center ${statusFill}`}>
        <Grip />
        <span className="ml-px w-[38px]">x:</span>
        <span className="w-[64px]">-2200.0</span>
        <span className="w-[33px]">y:</span>
        <span>+1900.0</span>
        <span className="mr-[3px] ml-auto text-[#000090]">th</span>
      </div>
    </footer>
  );
}

export default function App() {
  return (
    <div className="flex h-screen flex-col overflow-hidden bg-[#e3eaf2]">
      <Paints />
      <TitleBar />
      <MenuBar />
      <TopToolbars />
      <TabStrip />
      <div className="flex min-h-0 flex-1 items-stretch">
        <div className="flex shrink-0 items-start gap-[2px]">
          <ModeBar />
          <OrientationBar />
        </div>
        <DevicePanel />
        <div className="w-[4px] shrink-0 bg-[#a9c6da]" />
        <Schematic />
        <div className="w-[3px] shrink-0 bg-[#a9c6da]" />
      </div>
      <StatusBar />
    </div>
  );
}
